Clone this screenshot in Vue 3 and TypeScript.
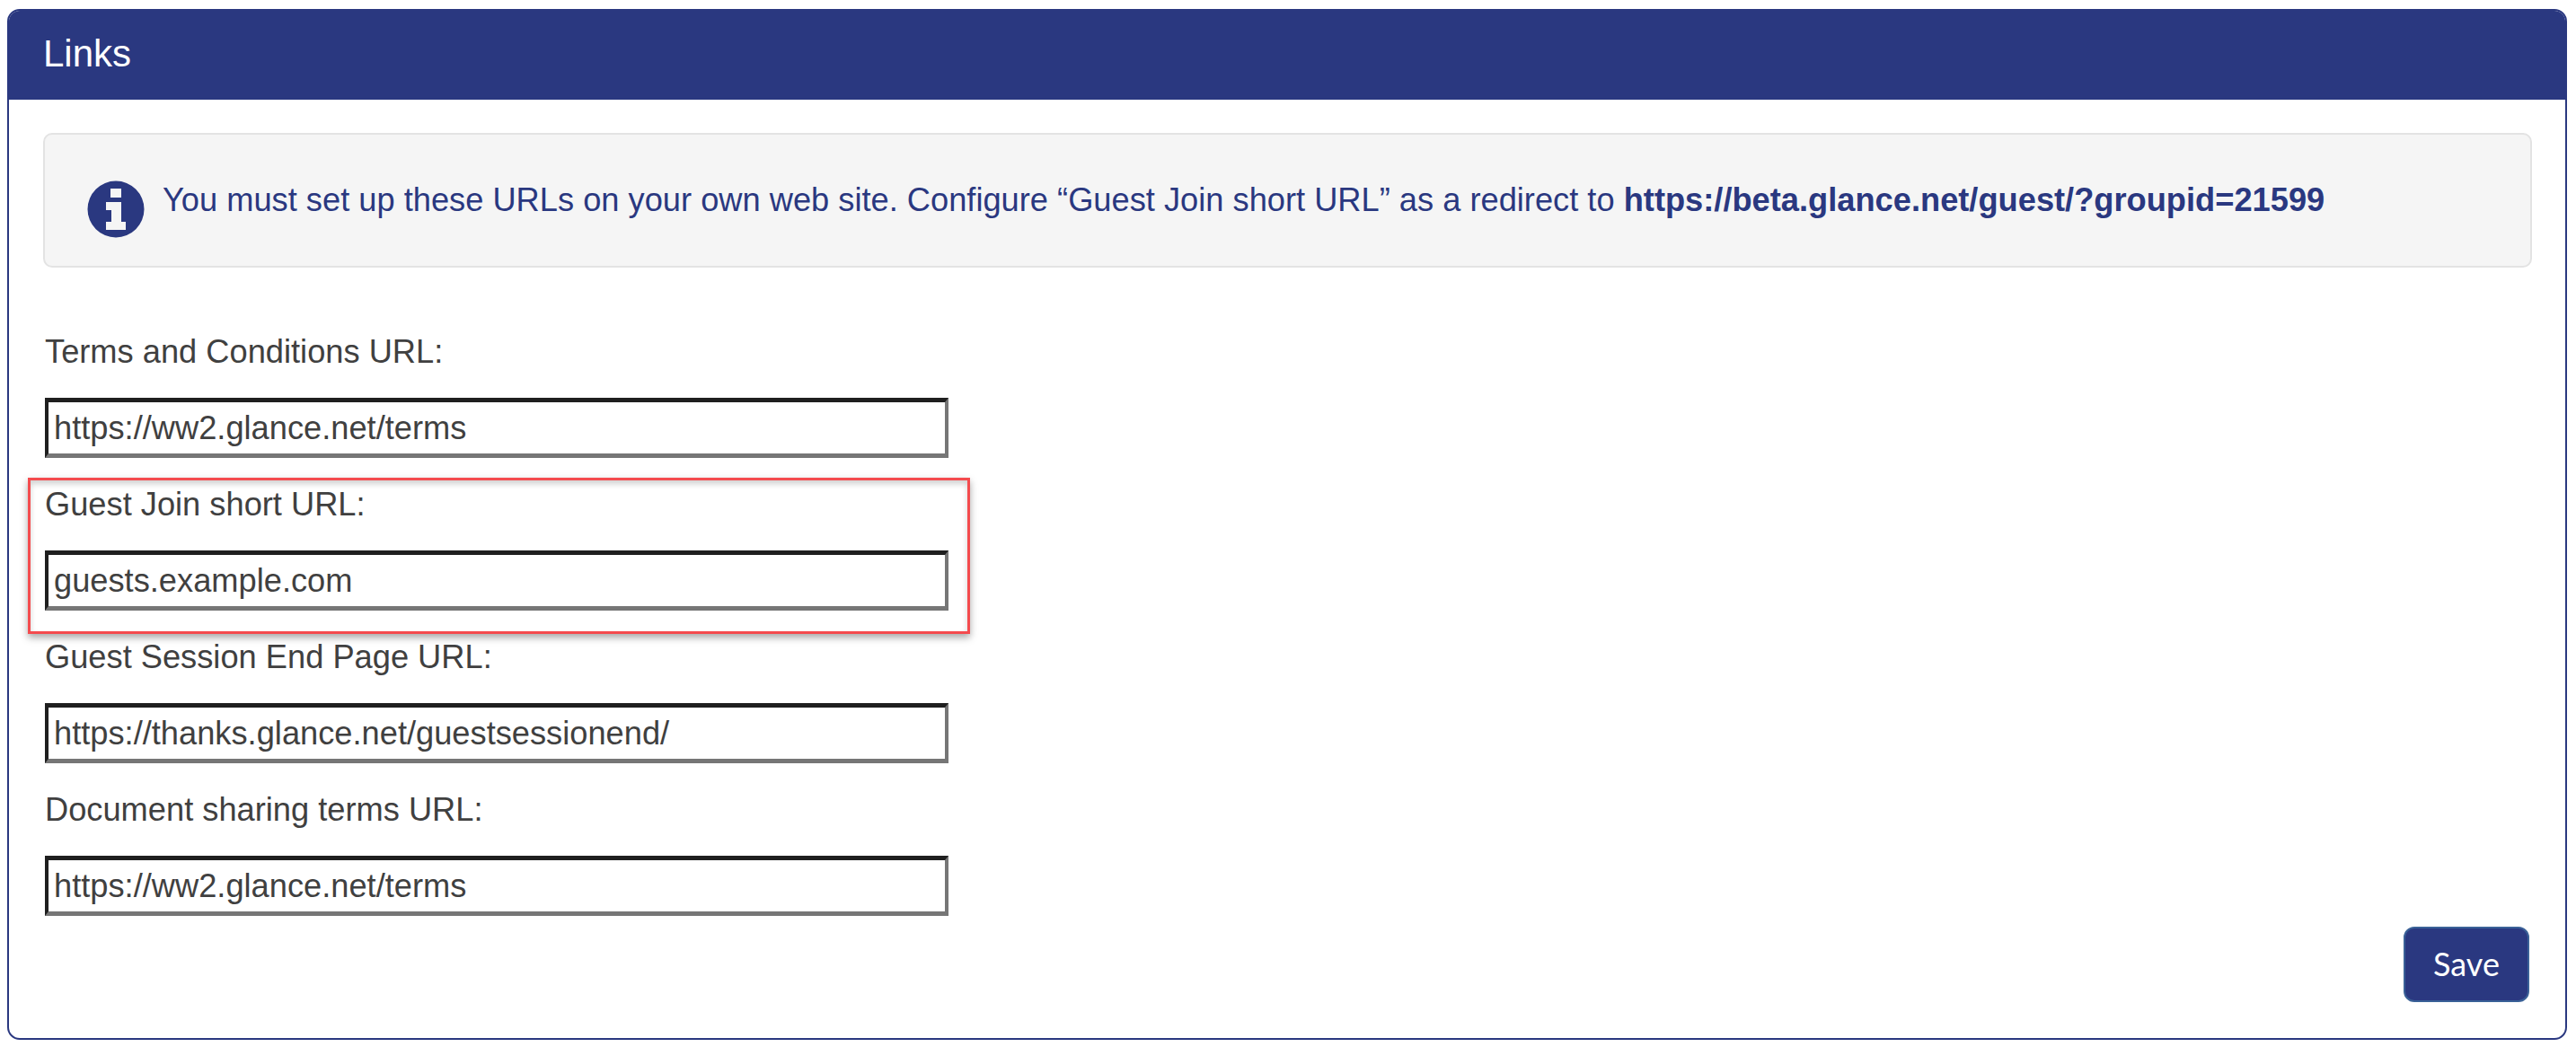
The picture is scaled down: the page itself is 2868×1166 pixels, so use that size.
<script setup lang="ts">
const fields = [
  { label: 'Terms and Conditions URL:', value: 'https://ww2.glance.net/terms', highlighted: false },
  { label: 'Guest Join short URL:', value: 'guests.example.com', highlighted: true },
  { label: 'Guest Session End Page URL:', value: 'https://thanks.glance.net/guestsessionend/', highlighted: false },
  { label: 'Document sharing terms URL:', value: 'https://ww2.glance.net/terms', highlighted: false },
]
</script>

<template>
  <div class="page">
    <section class="card">
      <h1 class="card-title">Links</h1>
      <div class="card-body">
        <div class="notice">
          <svg class="notice-icon" viewBox="0 0 64 64" aria-hidden="true">
            <path
              fill-rule="evenodd"
              d="M32 .5a31.5 31.5 0 1 0 0 63a31.5 31.5 0 1 0 0-63ZM26 9h12v10H26ZM21 24h17v22h5v9H21v-9h6V33h-6Z"
            />
          </svg>
          <p class="notice-text">
            You must set up these URLs on your own web site. Configure “Guest Join short URL” as a redirect to
            <strong>https://beta.glance.net/guest/?groupid=21599</strong>
          </p>
        </div>
        <form class="fields" @submit.prevent>
          <div v-for="field in fields" :key="field.label" class="field">
            <label class="field-label">{{ field.label }}</label>
            <input class="field-input" type="text" :value="field.value" />
            <div v-if="field.highlighted" class="highlight"></div>
          </div>
        </form>
        <div class="actions">
          <button class="save" type="button">Save</button>
        </div>
      </div>
    </section>
  </div>
</template>

<style>
html,
body {
  margin: 0;
  background: #fff;
}
</style>

<style scoped>
.page {
  box-sizing: border-box;
  width: 2868px;
  height: 1166px;
  padding: 10px 10px 8px 8px;
  font-family: "Liberation Sans", Arial, sans-serif;
}
.card {
  box-sizing: border-box;
  height: 1148px;
  display: flex;
  flex-direction: column;
  border: 2px solid #2a3880;
  border-radius: 14px;
  overflow: hidden;
  background: #fff;
}
.card-title {
  margin: 0;
  height: 99px;
  padding-left: 38px;
  background: #2a3880;
  color: #fff;
  font-size: 42px;
  font-weight: 400;
  line-height: 96px;
}
.card-body {
  flex: 1;
  display: flex;
  flex-direction: column;
  padding: 37px 37px 0 38px;
}
.notice {
  box-sizing: border-box;
  height: 150px;
  display: flex;
  align-items: center;
  gap: 20px;
  padding-left: 47px;
  border: 2px solid #e3e3e3;
  border-radius: 10px;
  background: #f5f5f5;
  color: #2a3880;
}
.notice-icon {
  flex: none;
  width: 64px;
  height: 64px;
  margin-top: 20px;
  fill: #2a3880;
}
.notice-text {
  margin: 0;
  font-size: 36.25px;
  line-height: 50px;
  white-space: nowrap;
}
.fields {
  display: flex;
  flex-direction: column;
  margin-top: 66px;
  padding-left: 2px;
}
.field {
  position: relative;
  display: flex;
  flex-direction: column;
  align-items: flex-start;
  height: 170px;
}
.field-label {
  height: 79px;
  color: #404040;
  font-size: 36.25px;
  line-height: 55px;
}
.field-input {
  box-sizing: border-box;
  width: 1006px;
  height: 67px;
  padding: 0 6px;
  border-style: solid;
  border-width: 5px 4px;
  border-color: #1f1f1f #767676 #767676 #1f1f1f;
  border-radius: 0;
  outline: none;
  background: #fff;
  color: #404040;
  font-family: inherit;
  font-size: 36.25px;
}
.highlight {
  position: absolute;
  top: -2px;
  left: -19px;
  width: 1049px;
  height: 174px;
  box-sizing: border-box;
  border: 3px solid #f44b4e;
  box-shadow: 0 4px 8px rgba(0, 0, 0, 0.35), inset 0 4px 6px rgba(0, 0, 0, 0.18);
  pointer-events: none;
}
.actions {
  display: flex;
  justify-content: flex-end;
  margin-top: -12px;
}
.save {
  box-sizing: border-box;
  width: 140px;
  height: 84px;
  margin-right: 3px;
  padding: 0 0 2px;
  border: 2px solid #3a6197;
  border-radius: 12px;
  background: #2a3880;
  color: #fff;
  font-family: Lato, "Open Sans", sans-serif;
  font-size: 36px;
}
</style>
